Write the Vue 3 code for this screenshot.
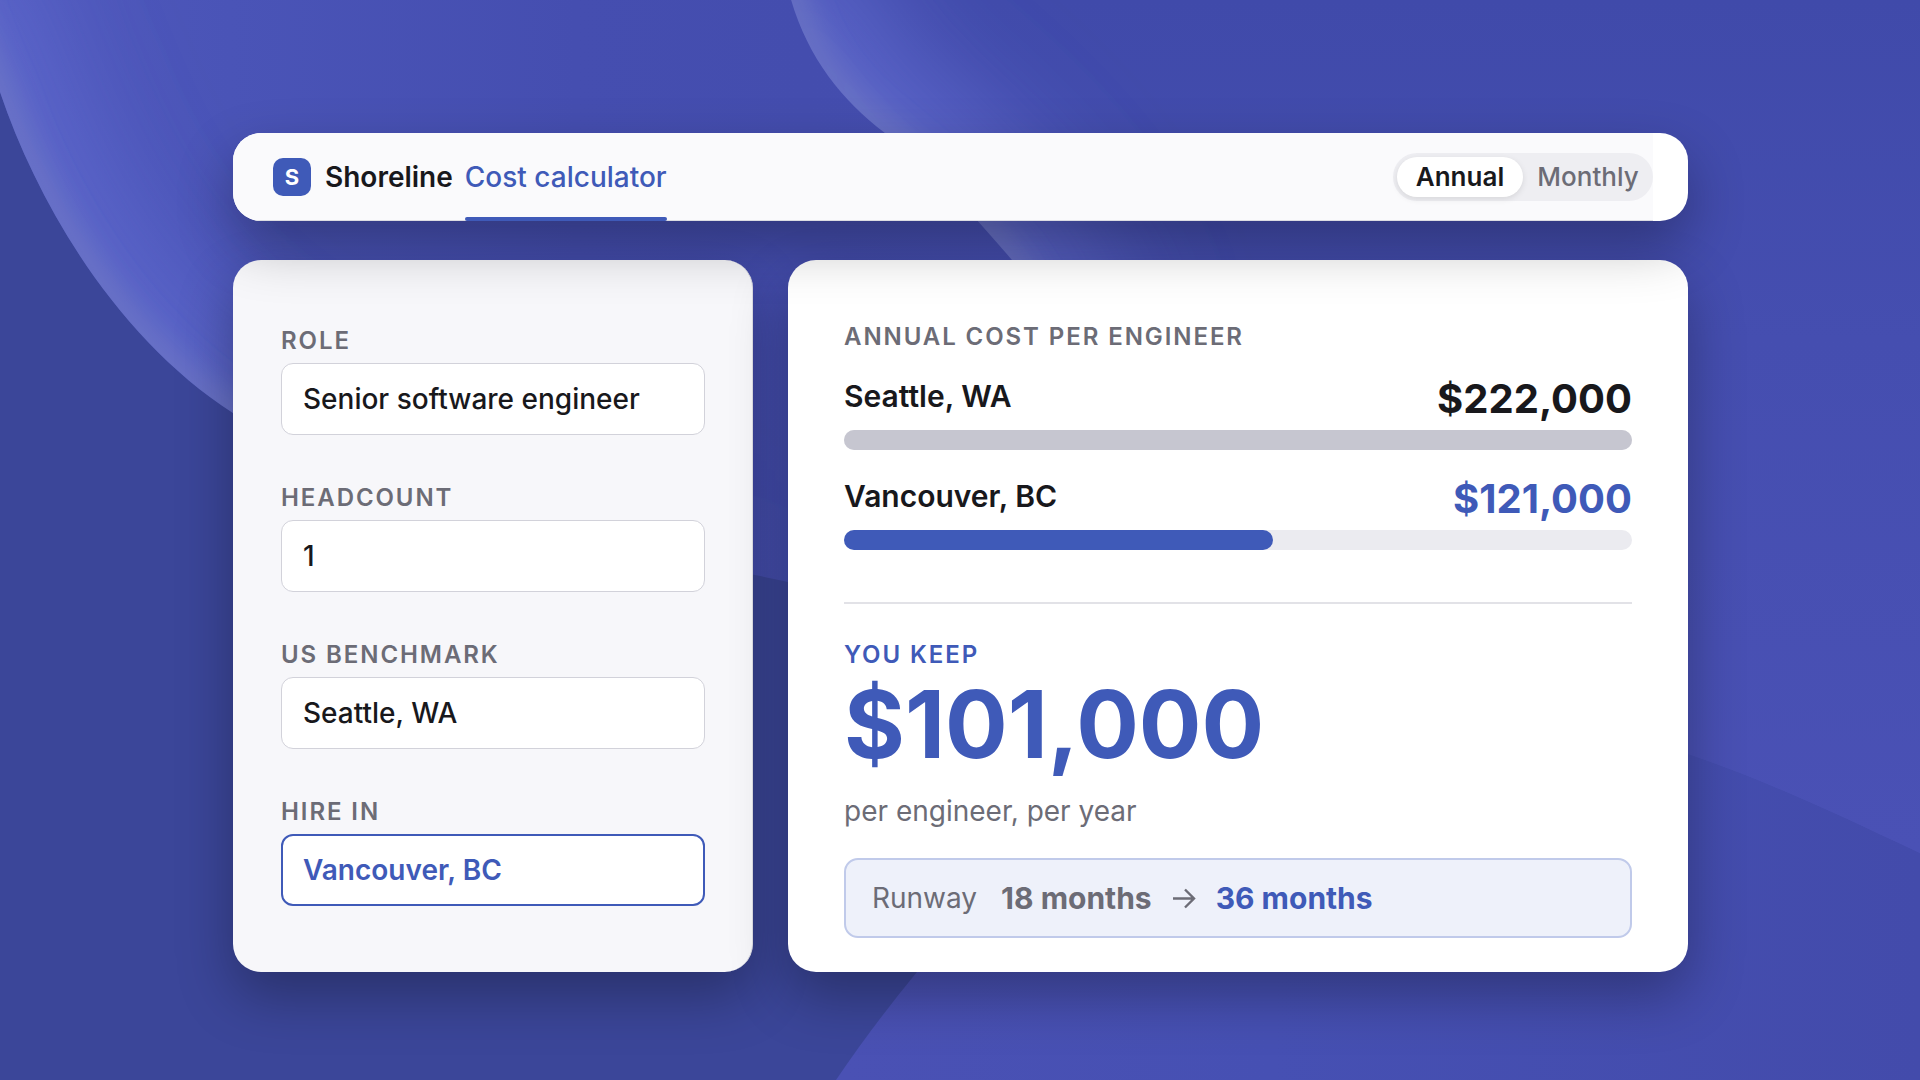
<template>
  <div class="page">
    <svg class="backdrop" viewBox="0 0 1920 1080" preserveAspectRatio="none" aria-hidden="true">
      <defs>
        <linearGradient id="upper" gradientUnits="userSpaceOnUse" x1="0" y1="0" x2="1920" y2="0">
          <stop offset="0" stop-color="#4f58bc" />
          <stop offset="0.12" stop-color="#4a54b7" />
          <stop offset="0.3" stop-color="#454eb0" />
          <stop offset="0.42" stop-color="#444dae" />
          <stop offset="1" stop-color="#4a52b6" />
        </linearGradient>
        <linearGradient id="inner" gradientUnits="userSpaceOnUse" x1="1300" y1="0" x2="1300" y2="850">
          <stop offset="0" stop-color="#404aaa" />
          <stop offset="0.4" stop-color="#454eb0" />
          <stop offset="1" stop-color="#4a51b5" />
        </linearGradient>
        <linearGradient id="lower" gradientUnits="userSpaceOnUse" x1="840" y1="0" x2="1920" y2="0">
          <stop offset="0" stop-color="#4a51b4" />
          <stop offset="0.4" stop-color="#4650b3" />
          <stop offset="1" stop-color="#434bab" />
        </linearGradient>
        <linearGradient id="upperGlow" gradientUnits="userSpaceOnUse" x1="0" y1="0" x2="760" y2="0">
          <stop offset="0" stop-color="#6670d6" />
          <stop offset="0.35" stop-color="#6670d6" />
          <stop offset="1" stop-color="#6670d6" stop-opacity="0" />
        </linearGradient>
        <linearGradient id="upperRim" gradientUnits="userSpaceOnUse" x1="0" y1="0" x2="760" y2="0">
          <stop offset="0" stop-color="#8088c4" />
          <stop offset="0.35" stop-color="#8088c4" />
          <stop offset="1" stop-color="#8088c4" stop-opacity="0" />
        </linearGradient>
        <clipPath id="clipUpper"><path :d="upperShape" /></clipPath>
        <clipPath id="clipInner"><path :d="innerShape" /></clipPath>
        <filter id="wide" filterUnits="userSpaceOnUse" x="-300" y="-300" width="2520" height="1680">
          <feGaussianBlur stdDeviation="56" />
        </filter>
        <filter id="narrow" filterUnits="userSpaceOnUse" x="-300" y="-300" width="2520" height="1680">
          <feGaussianBlur stdDeviation="14" />
        </filter>
      </defs>
      <path :d="lowerShape" fill="url(#lower)" />
      <path :d="upperShape" fill="url(#upper)" />
      <g clip-path="url(#clipUpper)" fill="none">
        <path :d="upperEdge" stroke="url(#upperGlow)" stroke-width="130" stroke-opacity="0.6" filter="url(#wide)" />
        <path :d="upperEdge" stroke="url(#upperRim)" stroke-width="28" stroke-opacity="0.5" filter="url(#narrow)" />
      </g>
      <path :d="innerShape" fill="url(#inner)" />
      <g clip-path="url(#clipInner)" fill="none">
        <path :d="innerGlow" stroke="#6670d6" stroke-width="150" stroke-opacity="0.7" filter="url(#wide)" />
        <path :d="innerGlow" stroke="#8088c4" stroke-width="28" stroke-opacity="0.5" filter="url(#narrow)" />
      </g>
    </svg>

    <main class="calculator">
      <header class="card topbar">
        <div class="topbar-inner">
          <div class="brand">
            <span class="brand-mark">S</span>
            <span class="brand-name">Shoreline</span>
          </div>
          <nav>
            <a class="tab" href="#calculator">Cost calculator</a>
          </nav>
          <div class="toggle" role="group" aria-label="Billing period">
            <button
              v-for="item in periods"
              :key="item"
              type="button"
              :class="{ active: period === item }"
              :aria-pressed="period === item"
              @click="period = item"
            >
              {{ item }}
            </button>
          </div>
        </div>
      </header>

      <div class="columns">
        <form class="card fields" @submit.prevent>
          <div v-for="field in fields" :key="field.id" class="field">
            <label :for="field.id">{{ field.label }}</label>
            <input :id="field.id" v-model="field.value" type="text" :class="{ selected: field.selected }">
          </div>
        </form>

        <section class="card results">
          <h2 class="caption">Annual cost per engineer</h2>
          <div v-for="cost in costs" :key="cost.city" class="cost" :class="cost.tone">
            <div class="cost-row">
              <span class="city">{{ cost.city }}</span>
              <span class="amount">{{ money(cost.amount) }}</span>
            </div>
            <div class="track">
              <div class="fill" :style="{ width: barWidth(cost.amount) }"></div>
            </div>
          </div>

          <div class="savings">
            <h2 class="caption accent">You keep</h2>
            <strong class="total">{{ money(savings) }}</strong>
            <p>per engineer, per year</p>
          </div>

          <div class="runway">
            <span>Runway</span>
            <span class="before">18 months</span>
            <svg class="arrow" viewBox="0 0 24 24" aria-hidden="true">
              <path d="M1 12.5H22M13 3.5l9 9-9 9" />
            </svg>
            <span class="after">36 months</span>
          </div>
        </section>
      </div>
    </main>
  </div>
</template>

<script setup>
import { computed, ref } from 'vue'

const periods = ['Annual', 'Monthly']
const period = ref('Annual')

const fields = ref([
  { id: 'role', label: 'Role', value: 'Senior software engineer' },
  { id: 'headcount', label: 'Headcount', value: '1' },
  { id: 'benchmark', label: 'US benchmark', value: 'Seattle, WA' },
  { id: 'hire-in', label: 'Hire in', value: 'Vancouver, BC', selected: true },
])

const costs = [
  { city: 'Seattle, WA', amount: 222000, tone: 'neutral' },
  { city: 'Vancouver, BC', amount: 121000, tone: 'primary' },
]

const savings = computed(() => costs[0].amount - costs[1].amount)

const money = (value) => `$${value.toLocaleString('en-US')}`
const barWidth = (value) => `${(value / costs[0].amount) * 100}%`

// Backdrop curves, drawn on a 1920x1080 canvas
const upperEdge = 'M-50 -60C-40 0 -22 46 0 92C40 210 120 340 233 413C400 530 600 540 788 582C1150 640 1500 690 1697 757C1780 786 1850 820 1960 872'
const upperShape = `${upperEdge}V-60Z`
const innerGlow = 'M780 -60C788 30 828 90 885 133C930 168 965 205 1012 260C1030 290 1060 330 1090 370'
const innerShape = 'M780 -60C788 30 828 90 885 133C930 168 965 205 1012 260C1100 400 1300 600 1697 757C1780 786 1850 820 1960 872V-60Z'
const lowerShape = 'M836 1080C863 1040 890 1005 917 972C1050 820 1200 700 1400 600H1920V1080Z'
</script>

<style>
body {
  margin: 0;
}
</style>

<style scoped>
.page {
  position: relative;
  box-sizing: border-box;
  min-height: 100vh;
  padding: 133px 232px 108px 233px;
  overflow: hidden;
  color: #18181c;
  background: #3b4699;
  font-family: Inter, "Liberation Sans", sans-serif;
}

.page * {
  box-sizing: border-box;
}

.backdrop {
  position: absolute;
  inset: 0;
  width: 100%;
  height: 100%;
}

.calculator {
  position: relative;
  display: grid;
  gap: 39px;
}

.card {
  border-radius: 28px;
  background: #fff;
  box-shadow: 0 24px 56px rgba(0, 0, 0, 0.3);
}

.topbar {
  z-index: 1;
  padding-right: 35px;
  overflow: hidden;
}

.topbar-inner {
  display: flex;
  align-items: center;
  height: 88px;
  padding-left: 40px;
  border-bottom: 1px solid #dcdce2;
  background: #fafafc;
}

.brand {
  display: flex;
  align-items: center;
  gap: 14px;
}

.brand-mark {
  display: grid;
  place-items: center;
  width: 38px;
  height: 38px;
  border-radius: 10px;
  color: #fff;
  background: #3f5ab8;
  font-size: 22px;
  font-weight: 700;
}

.brand-name {
  font-size: 28px;
  font-weight: 600;
}

nav {
  align-self: stretch;
  margin-left: 12px;
}

.tab {
  position: relative;
  display: flex;
  align-items: center;
  height: 88px;
  color: #3f5ab8;
  font-size: 28px;
  font-weight: 500;
  text-decoration: none;
}

.tab::after {
  position: absolute;
  right: 0;
  bottom: 0;
  left: 0;
  height: 4px;
  border-radius: 2px;
  background: #3f5ab8;
  content: "";
}

.toggle {
  display: grid;
  grid-template-columns: 126px 1fr;
  gap: 4px;
  width: 260px;
  margin-left: auto;
  padding: 4px;
  border-radius: 24px;
  background: #eeeef2;
}

.toggle button {
  height: 40px;
  padding: 0;
  border: 0;
  border-radius: 20px;
  color: #6c6c76;
  background: transparent;
  font: 500 26px Inter, "Liberation Sans", sans-serif;
  cursor: pointer;
}

.toggle button.active {
  color: #18181c;
  background: #fff;
  box-shadow: 0 2px 6px rgba(0, 0, 0, 0.1);
  font-weight: 600;
}

.columns {
  display: grid;
  grid-template-columns: 520fr 900fr;
  gap: 35px;
}

.fields {
  display: flex;
  flex-direction: column;
  gap: 47px;
  padding: 65px 47px 64px 48px;
  border-right: 1px solid #dcdce2;
  background: #f7f7fa;
}

.field {
  display: flex;
  flex-direction: column;
  gap: 6px;
}

label,
.caption {
  margin: 0;
  color: #6c6c76;
  font-size: 24px;
  font-weight: 600;
  line-height: 32px;
  letter-spacing: 0.08em;
  text-transform: uppercase;
}

input {
  width: 100%;
  height: 72px;
  padding: 0 21px;
  border: 1px solid #d2d2da;
  border-radius: 12px;
  color: #18181c;
  background: #fff;
  font: 500 28px Inter, "Liberation Sans", sans-serif;
}

input.selected {
  padding: 0 20px;
  border: 2px solid #3f5ab8;
  color: #3f5ab8;
  font-weight: 600;
}

.results {
  padding: 61px 56px 34px;
}

.cost {
  margin-top: 28px;
}

.caption + .cost {
  margin-top: 25px;
}

.cost-row {
  display: flex;
  justify-content: space-between;
  height: 52px;
}

.city {
  font-size: 30px;
  font-weight: 600;
  line-height: 36px;
}

.amount {
  font-size: 40px;
  font-weight: 700;
  line-height: 42px;
}

.track {
  height: 20px;
  border-radius: 10px;
  background: #ebebf0;
}

.fill {
  height: 100%;
  border-radius: 10px;
  background: #c6c6d0;
}

.primary .amount,
.caption.accent,
.total,
.after {
  color: #3f5ab8;
}

.primary .fill {
  background: #3f5ab8;
}

.savings {
  margin-top: 52px;
  padding-top: 35px;
  border-top: 2px solid #e2e2e7;
}

.total {
  display: block;
  font-size: 93px;
  font-weight: 700;
  line-height: 106px;
}

.savings p {
  margin: 16px 0 0;
  color: #6c6c76;
  font-size: 28px;
  line-height: 36px;
}

.runway {
  display: flex;
  align-items: center;
  height: 80px;
  margin-top: 29px;
  padding: 0 26px;
  border: 2px solid #c0caea;
  border-radius: 14px;
  color: #6c6c76;
  background: #eef1fa;
  font-size: 28px;
}

.before,
.after {
  font-size: 30px;
  font-weight: 700;
}

.before {
  margin-left: 24px;
}

.arrow {
  width: 24px;
  height: 24px;
  margin: 0 20px;
  fill: none;
  stroke: currentColor;
  stroke-width: 2.4;
}
</style>
